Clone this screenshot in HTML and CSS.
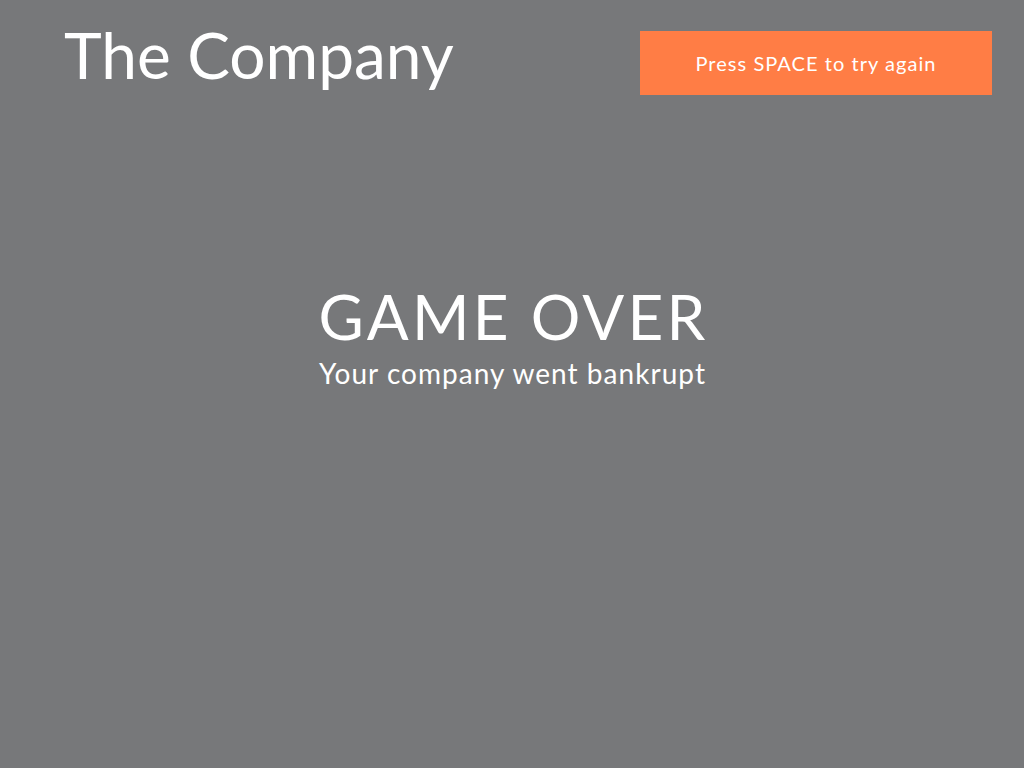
FILE: index.html
```html
<!DOCTYPE html>
<html lang="en">
<head>
<meta charset="utf-8">
<title>The Company</title>
<link rel="stylesheet" href="styles.css">
</head>
<body>
<div class="screen">
  <header class="top">
    <h1 class="brand">The Company</h1>
    <div class="retry">Press SPACE to try again</div>
  </header>
  <main class="over">
    <h2 class="over-title">GAME OVER</h2>
    <p class="over-sub">Your company went bankrupt</p>
  </main>
</div>
</body>
</html>
```
FILE: styles.css
```css
html, body {
  margin: 0;
  padding: 0;
  height: 100%;
}
body {
  background: #77787a;
  color: #ffffff;
  font-family: "Lato", "Noto Sans", sans-serif;
}
.screen {
  height: 768px;
  display: flex;
  flex-direction: column;
}
.top {
  display: flex;
  justify-content: space-between;
  align-items: flex-start;
  padding: 31px 32px 0 64px;
}
.brand {
  margin: 0;
  font-weight: 400;
  font-size: 64px;
  line-height: 46px;
  letter-spacing: 0;
  padding-top: 1px;
}
.retry {
  width: 352px;
  height: 64px;
  background: #ff7d45;
  display: flex;
  align-items: center;
  justify-content: center;
  font-size: 20px;
  letter-spacing: 1.05px;
}
.over {
  display: flex;
  flex-direction: column;
  align-items: center;
  padding-top: 189px;
}
.over-title {
  margin: 0;
  font-weight: 400;
  font-size: 62px;
  line-height: 64px;
  letter-spacing: 3.2px;
  padding-left: 3.2px;
}
.over-sub {
  margin: 0;
  font-size: 28px;
  line-height: 50px;
  letter-spacing: 1.04px;
  padding-left: 1px;
}
```
